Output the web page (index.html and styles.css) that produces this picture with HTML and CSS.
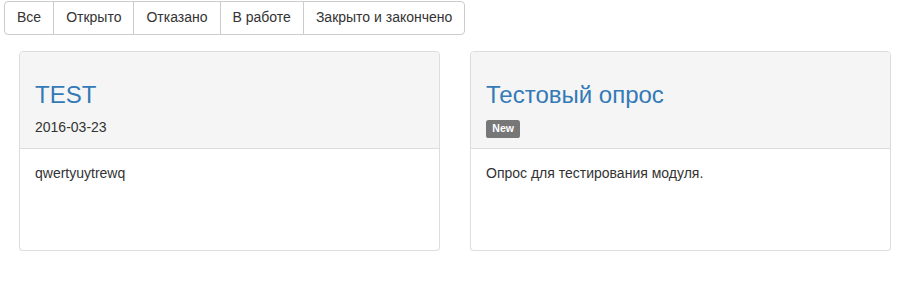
FILE: index.html
```html
<!DOCTYPE html>
<html lang="ru">
<head>
    <meta charset="UTF-8">
    <meta name="viewport" content="width=device-width, initial-scale=1.0">
    <title>Опросы</title>
    <link rel="stylesheet" href="styles.css">
</head>
<body>
    <div class="filters">
        <button class="filter-btn">Все</button>
        <button class="filter-btn">Открыто</button>
        <button class="filter-btn">Отказано</button>
        <button class="filter-btn">В работе</button>
        <button class="filter-btn">Закрыто и закончено</button>
    </div>

    <div class="polls">
        <div class="panel">
            <div class="panel-heading">
                <h3 class="panel-title">TEST</h3>
                <p class="panel-meta">2016-03-23</p>
            </div>
            <div class="panel-body">
                <p>qwertyuytrewq</p>
            </div>
        </div>
        <div class="panel">
            <div class="panel-heading">
                <h3 class="panel-title">Тестовый опрос</h3>
                <p class="panel-meta"><span class="label">New</span></p>
            </div>
            <div class="panel-body">
                <p>Опрос для тестирования модуля.</p>
            </div>
        </div>
    </div>
</body>
</html>
```

FILE: styles.css
```css
body { margin: 0; padding: 0; background-color: #fff; color: #333; font-family: "Liberation Sans", Arial, sans-serif; font-size: 14px; line-height: 1.42857; }
.filters { display: inline-flex; margin: 1px 0 0 4px; }
.filter-btn { font-family: inherit; font-size: 14px; line-height: 1.42857; color: #333; background-color: #fff; border: 1px solid #ccc; padding: 6px 12px; margin: 0 0 0 -1px; cursor: pointer; border-radius: 0; }
.filter-btn:first-child { margin-left: 0; border-radius: 4px 0 0 4px; }
.filter-btn:last-child { border-radius: 0 4px 4px 0; }
.filter-btn:hover { background-color: #e6e6e6; border-color: #adadad; }
.polls { display: flex; gap: 30px; margin: 16px 0 0 19px; }
.panel { width: 421px; box-sizing: border-box; border: 1px solid #ddd; border-radius: 4px; background-color: #fff; box-shadow: 0 1px 1px rgba(0,0,0,.05); }
.panel-heading { background-color: #f5f5f5; border-bottom: 1px solid #ddd; border-radius: 3px 3px 0 0; padding: 10px 15px; }
.panel-title { margin: 20px 0 10px; font-size: 24px; font-weight: 500; line-height: 1.1; color: #337ab7; }
.panel-meta { margin: 0; }
.panel-body { padding: 15px; min-height: 71px; }
.panel-body p { margin: 0 0 10px; }
.label { display: inline; padding: .2em .6em .3em; font-size: 75%; font-weight: bold; line-height: 1; color: #fff; background-color: #777; border-radius: .25em; white-space: nowrap; vertical-align: baseline; }
```
